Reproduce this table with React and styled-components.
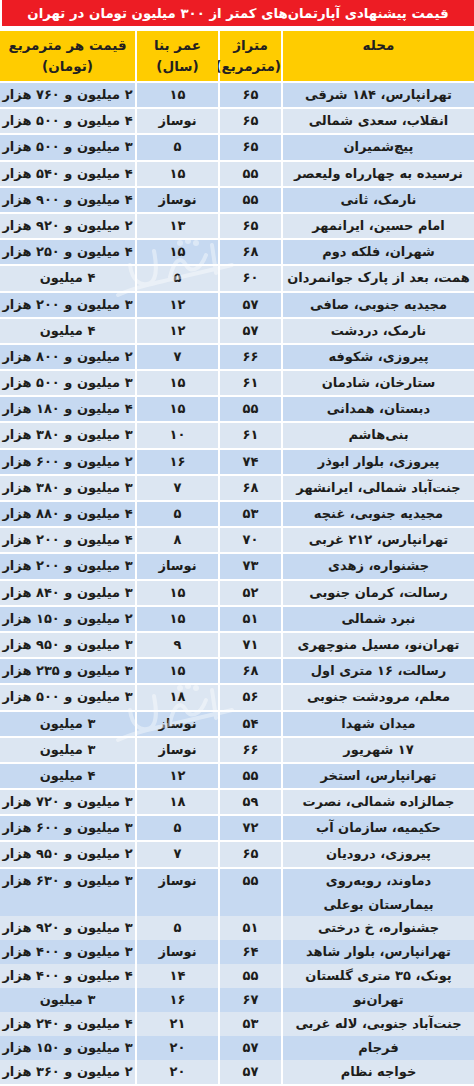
import React from 'react'
import styled, { createGlobalStyle } from 'styled-components'

const GlobalStyle = createGlobalStyle`
    html, body {
        margin: 0;
        padding: 0;
        background: #ffffff;
    }
    body {
        font-family: "DejaVu Sans", "Noto Sans", sans-serif;
    }
`

const Page = styled.div`
    width: 474px;
    direction: rtl;
    position: relative;
    overflow: hidden;
`

const Title = styled.h1`
    margin: 0 0 0 2px;
    height: 26px;
    background: #ed1c24;
    color: #ffffff;
    font-size: 13.3px;
    font-weight: bold;
    line-height: 27px;
    text-align: center;
    white-space: nowrap;
`

const Grid = styled.div`
    display: grid;
    grid-template-columns: 191px 61px 81px 135px;
    column-gap: 2px;
`

const Head = styled(Grid)`
    margin-top: 5px;
    height: 50px;
    margin-bottom: 2px;
`

const HeadCell = styled.div`
    background: #ffcc00;
    color: #231f20;
    font-size: 13.5px;
    font-weight: bold;
    line-height: 21px;
    padding-top: 4px;
    text-align: center;
    white-space: pre-line;
`

const Row = styled(Grid)`
    height: ${p => p.$h}px;
    margin-bottom: 2px;
`

const Cell = styled.div`
    background: ${p => (p.$dark ? '#c6d9f1' : '#dce6f2')};
    color: #1d1d1b;
    font-size: 13px;
    font-weight: bold;
    line-height: 24px;
    text-align: center;
    white-space: pre-line;
`

const Watermark = styled.div`
    position: absolute;
    left: 110px;
    top: ${p => p.$top}px;
    width: 130px;
    height: 90px;
    pointer-events: none;
    opacity: 0.4;
`

const rows = [
    ['تهرانپارس، ۱۸۴ شرقی', '۶۵', '۱۵', '۲ میلیون و ۷۶۰ هزار'],
    ['انقلاب، سعدی شمالی', '۶۵', 'نوساز', '۴ میلیون و ۵۰۰ هزار'],
    ['پیچ‌شمیران', '۶۵', '۵', '۳ میلیون و ۵۰۰ هزار'],
    ['نرسیده به چهارراه ولیعصر', '۵۵', '۱۵', '۴ میلیون و ۵۴۰ هزار'],
    ['نارمک، ثانی', '۵۵', 'نوساز', '۴ میلیون و ۹۰۰ هزار'],
    ['امام حسین، ایرانمهر', '۶۵', '۱۳', '۲ میلیون و ۹۲۰ هزار'],
    ['شهران، فلکه دوم', '۶۸', '۱۵', '۴ میلیون و ۲۵۰ هزار'],
    ['همت، بعد از پارک جوانمردان', '۶۰', '۵', '۴ میلیون'],
    ['مجیدیه جنوبی، صافی', '۵۷', '۱۲', '۳ میلیون و ۲۰۰ هزار'],
    ['نارمک، دردشت', '۵۷', '۱۲', '۴ میلیون'],
    ['پیروزی، شکوفه', '۶۶', '۷', '۲ میلیون و ۸۰۰ هزار'],
    ['ستارخان، شادمان', '۶۱', '۱۵', '۳ میلیون و ۵۰۰ هزار'],
    ['دبستان، همدانی', '۵۵', '۱۵', '۴ میلیون و ۱۸۰ هزار'],
    ['بنی‌هاشم', '۶۱', '۱۰', '۳ میلیون و ۳۸۰ هزار'],
    ['پیروزی، بلوار ابوذر', '۷۴', '۱۶', '۲ میلیون و ۶۰۰ هزار'],
    ['جنت‌آباد شمالی، ایرانشهر', '۶۸', '۷', '۳ میلیون و ۳۸۰ هزار'],
    ['مجیدیه جنوبی، غنچه', '۵۳', '۵', '۴ میلیون و ۸۸۰ هزار'],
    ['تهرانپارس، ۲۱۲ غربی', '۷۰', '۸', '۴ میلیون و ۲۰۰ هزار'],
    ['جشنواره، زهدی', '۷۳', 'نوساز', '۳ میلیون و ۲۰۰ هزار'],
    ['رسالت، کرمان جنوبی', '۵۲', '۱۵', '۳ میلیون و ۸۴۰ هزار'],
    ['نبرد شمالی', '۵۱', '۱۵', '۲ میلیون و ۱۵۰ هزار'],
    ['تهران‌نو، مسیل منوچهری', '۷۱', '۹', '۳ میلیون و ۹۵۰ هزار'],
    ['رسالت، ۱۶ متری اول', '۶۸', '۱۵', '۳ میلیون و ۲۳۵ هزار'],
    ['معلم، مرودشت جنوبی', '۵۶', '۱۸', '۳ میلیون و ۵۰۰ هزار'],
    ['میدان شهدا', '۵۴', 'نوساز', '۳ میلیون'],
    ['۱۷ شهریور', '۶۶', 'نوساز', '۳ میلیون'],
    ['تهرانپارس، استخر', '۵۵', '۱۲', '۴ میلیون'],
    ['جمالزاده شمالی، نصرت', '۵۹', '۱۸', '۳ میلیون و ۷۲۰ هزار'],
    ['حکیمیه، سازمان آب', '۷۲', '۵', '۳ میلیون و ۶۰۰ هزار'],
    ['پیروزی، درودیان', '۶۵', '۷', '۲ میلیون و ۹۵۰ هزار'],
    ['دماوند، روبه‌روی\nبیمارستان بوعلی', '۵۵', 'نوساز', '۳ میلیون و ۶۳۰ هزار'],
    ['جشنواره، خ درختی', '۵۱', '۵', '۳ میلیون و ۹۲۰ هزار'],
    ['تهرانپارس، بلوار شاهد', '۶۴', 'نوساز', '۳ میلیون و ۴۰۰ هزار'],
    ['پونک، ۳۵ متری گلستان', '۵۵', '۱۴', '۴ میلیون و ۴۰۰ هزار'],
    ['تهران‌نو', '۶۷', '۱۶', '۳ میلیون'],
    ['جنت‌آباد جنوبی، لاله غربی', '۵۳', '۲۱', '۴ میلیون و ۲۴۰ هزار'],
    ['فرجام', '۵۷', '۲۰', '۳ میلیون و ۱۵۰ هزار'],
    ['خواجه نظام', '۵۷', '۲۰', '۲ میلیون و ۳۶۰ هزار'],
]

const rowHeight = i => (i < 30 ? 24.2 : i === 30 ? 45.3 : 22)

const Mark = () => (
    <svg width='130' height='90' viewBox='0 0 130 90'>
        <g fill='none' stroke='#ffffff' strokeWidth='4' strokeLinecap='round'>
            <path d='M8 70 C 30 60, 60 55, 122 40' />
            <path d='M20 40 C 22 55, 30 62, 40 58 C 48 54, 46 36, 44 26' />
            <path d='M60 52 C 64 36, 70 30, 76 40 C 80 48, 90 46, 96 30' />
            <path d='M102 20 L 106 48' />
        </g>
        <g fill='#ffffff'>
            <circle cx='70' cy='18' r='3' />
            <circle cx='78' cy='16' r='3' />
            <circle cx='86' cy='18' r='3' />
        </g>
    </svg>
)

export default function App() {
    return (
        <>
            <GlobalStyle />
            <Page>
                <Title>قیمت پیشنهادی آپارتمان‌های کمتر از ۳۰۰ میلیون تومان  در تهران</Title>
                <Head>
                    <HeadCell>محله</HeadCell>
                    <HeadCell>{'متراژ\n(مترمربع)'}</HeadCell>
                    <HeadCell>{'عمر بنا\n(سال)'}</HeadCell>
                    <HeadCell>{'قیمت هر مترمربع\n(تومان)'}</HeadCell>
                </Head>
                {rows.map((r, i) => (
                    <Row key={i} $h={rowHeight(i)}>
                        {r.map((c, j) => (
                            <Cell key={j} $dark={i % 2 === 0}>{c}</Cell>
                        ))}
                    </Row>
                ))}
                <Watermark $top={225}><Mark /></Watermark>
                <Watermark $top={670}><Mark /></Watermark>
            </Page>
        </>
    )
}
